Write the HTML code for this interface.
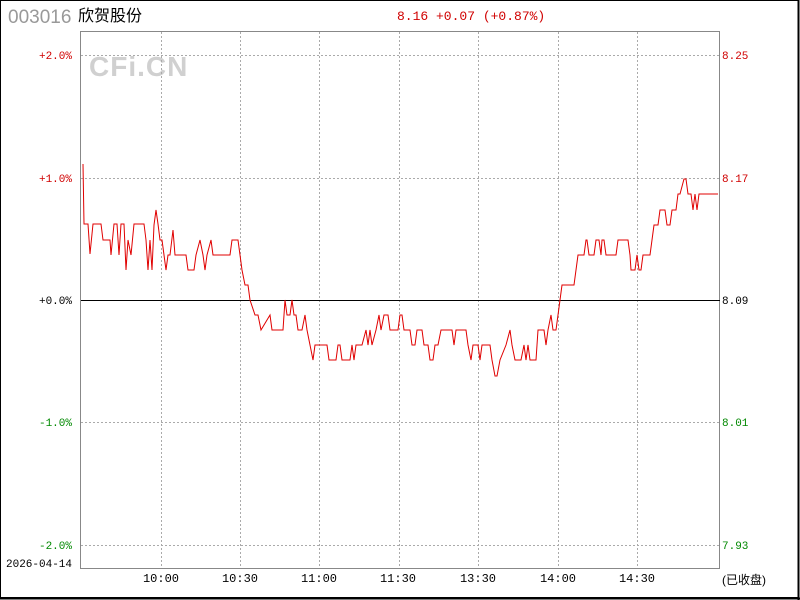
<!DOCTYPE html>
<html><head><meta charset="utf-8"><style>
html,body{margin:0;padding:0;background:#fff;}
svg{display:block}
</style></head><body>
<svg width="800" height="600" xmlns="http://www.w3.org/2000/svg" font-family="Liberation Mono, DejaVu Sans Mono, monospace">
<rect x="0.5" y="0.5" width="798" height="597" fill="#fff" stroke="#000" stroke-width="1"/>
<line x1="0" y1="598.5" x2="800" y2="598.5" stroke="#000" stroke-width="2"/>
<line x1="798.5" y1="0" x2="798.5" y2="600" stroke="#000" stroke-width="2"/>
<text x="8" y="23" font-family="Liberation Sans, sans-serif" font-size="19" fill="#999">003016</text>
<text x="78" y="21" font-family="Liberation Sans, 'Noto Sans CJK SC', sans-serif" font-size="16" fill="#000">欣贺股份</text>
<text x="397" y="20" font-size="13" fill="#d00000">8.16 +0.07 (+0.87%)</text>
<text x="89" y="76" font-family="Liberation Sans, sans-serif" font-weight="900" font-size="28" fill="#d0d0d0" letter-spacing="1">CFi.CN</text>
<g stroke="#aaa" stroke-width="1" stroke-dasharray="2,2">
<line x1="81" y1="55.5" x2="720" y2="55.5"/>
<line x1="81" y1="178.5" x2="720" y2="178.5"/>
<line x1="81" y1="422.5" x2="720" y2="422.5"/>
<line x1="81" y1="545.5" x2="720" y2="545.5"/>
<line x1="161.5" y1="32" x2="161.5" y2="568"/>
<line x1="240.5" y1="32" x2="240.5" y2="568"/>
<line x1="319.5" y1="32" x2="319.5" y2="568"/>
<line x1="399.5" y1="32" x2="399.5" y2="568"/>
<line x1="478.5" y1="32" x2="478.5" y2="568"/>
<line x1="558.5" y1="32" x2="558.5" y2="568"/>
<line x1="637.5" y1="32" x2="637.5" y2="568"/>
</g>
<rect x="80.5" y="31.5" width="639" height="537" fill="none" stroke="#888" stroke-width="1"/>
<line x1="81" y1="300.5" x2="720" y2="300.5" stroke="#000" stroke-width="1"/>
<g font-size="11">
<text x="72" y="59" text-anchor="end" fill="#d00000">+2.0%</text>
<text x="72" y="182" text-anchor="end" fill="#d00000">+1.0%</text>
<text x="72" y="304" text-anchor="end" fill="#000">+0.0%</text>
<text x="72" y="426" text-anchor="end" fill="#008800">-1.0%</text>
<text x="72" y="549" text-anchor="end" fill="#008800">-2.0%</text>
<text x="722" y="59" fill="#d00000">8.25</text>
<text x="722" y="182" fill="#d00000">8.17</text>
<text x="722" y="304" fill="#000">8.09</text>
<text x="722" y="426" fill="#008800">8.01</text>
<text x="722" y="549" fill="#008800">7.93</text>
<text x="6" y="567" fill="#000">2026-04-14</text>
<g text-anchor="middle" fill="#000" font-size="12">
<text x="161" y="582">10:00</text>
<text x="240" y="582">10:30</text>
<text x="319" y="582">11:00</text>
<text x="398" y="582">11:30</text>
<text x="478" y="582">13:30</text>
<text x="558" y="582">14:00</text>
<text x="637" y="582">14:30</text>
</g>
<text x="722" y="584" font-family="Liberation Sans, 'Noto Sans CJK SC', sans-serif" font-size="12" fill="#000">(已收盘)</text>
</g>
<polyline fill="none" stroke="#e00000" stroke-width="1" points="
83,164 84,224 88,224 90,254 93,224 101,224 103,240 110,240 111,255 114,224 117,224 119,255 121,224 124,224 126,270 128,240 131,255 134,224 140,224 144,224 146,240 148,270 150,240 152,270 154,225 156,210 158,224 160,240 162,240 164,255 166,270 168,255 170,255 173,230 175,255 186,255 188,270 194,270 196,255 200,240 203,255 205,270 207,255 211,240 213,255 230,255 232,240 238,240 240,255 242,270 245,285 248,285 250,300 255,315 258,315 261,330 270,315 272,330 283,330 285,300 287,315 290,315 292,300 294,315 296,315 298,330 302,330 305,315 307,330 310,345 313,360 315,345 317,345 327,345 329,360 336,360 338,345 340,345 342,360 350,360 352,345 354,360 356,345 362,345 366,330 368,345 370,330 372,345 376,330 379,315 381,330 384,315 388,315 390,330 398,330 400,315 402,315 404,330 410,330 412,345 415,345 417,330 422,330 424,345 428,345 430,360 433,360 435,345 438,345 441,330 452,330 454,345 456,330 466,330 468,345 471,360 473,345 478,345 480,360 482,345 490,345 492,360 495,376 497,376 500,360 506,345 510,330 512,345 515,360 521,360 524,345 526,360 528,345 530,360 536,360 538,330 544,330 546,345 548,330 551,315 553,330 556,330 558,315 560,300 562,285 565,285 574,285 576,270 578,255 584,255 586,240 587,240 589,255 594,255 596,240 599,240 601,255 602,240 604,240 606,255 616,255 618,240 628,240 630,255 631,270 635,270 637,255 639,270 641,270 643,255 650,255 652,240 654,225 658,225 660,210 665,210 667,225 670,225 672,210 676,210 678,194 680,194 684,179 686,179 688,194 691,194 693,210 695,194 697,210 699,194 701,194 703,194 718,194"/>
</svg>
</body></html>
